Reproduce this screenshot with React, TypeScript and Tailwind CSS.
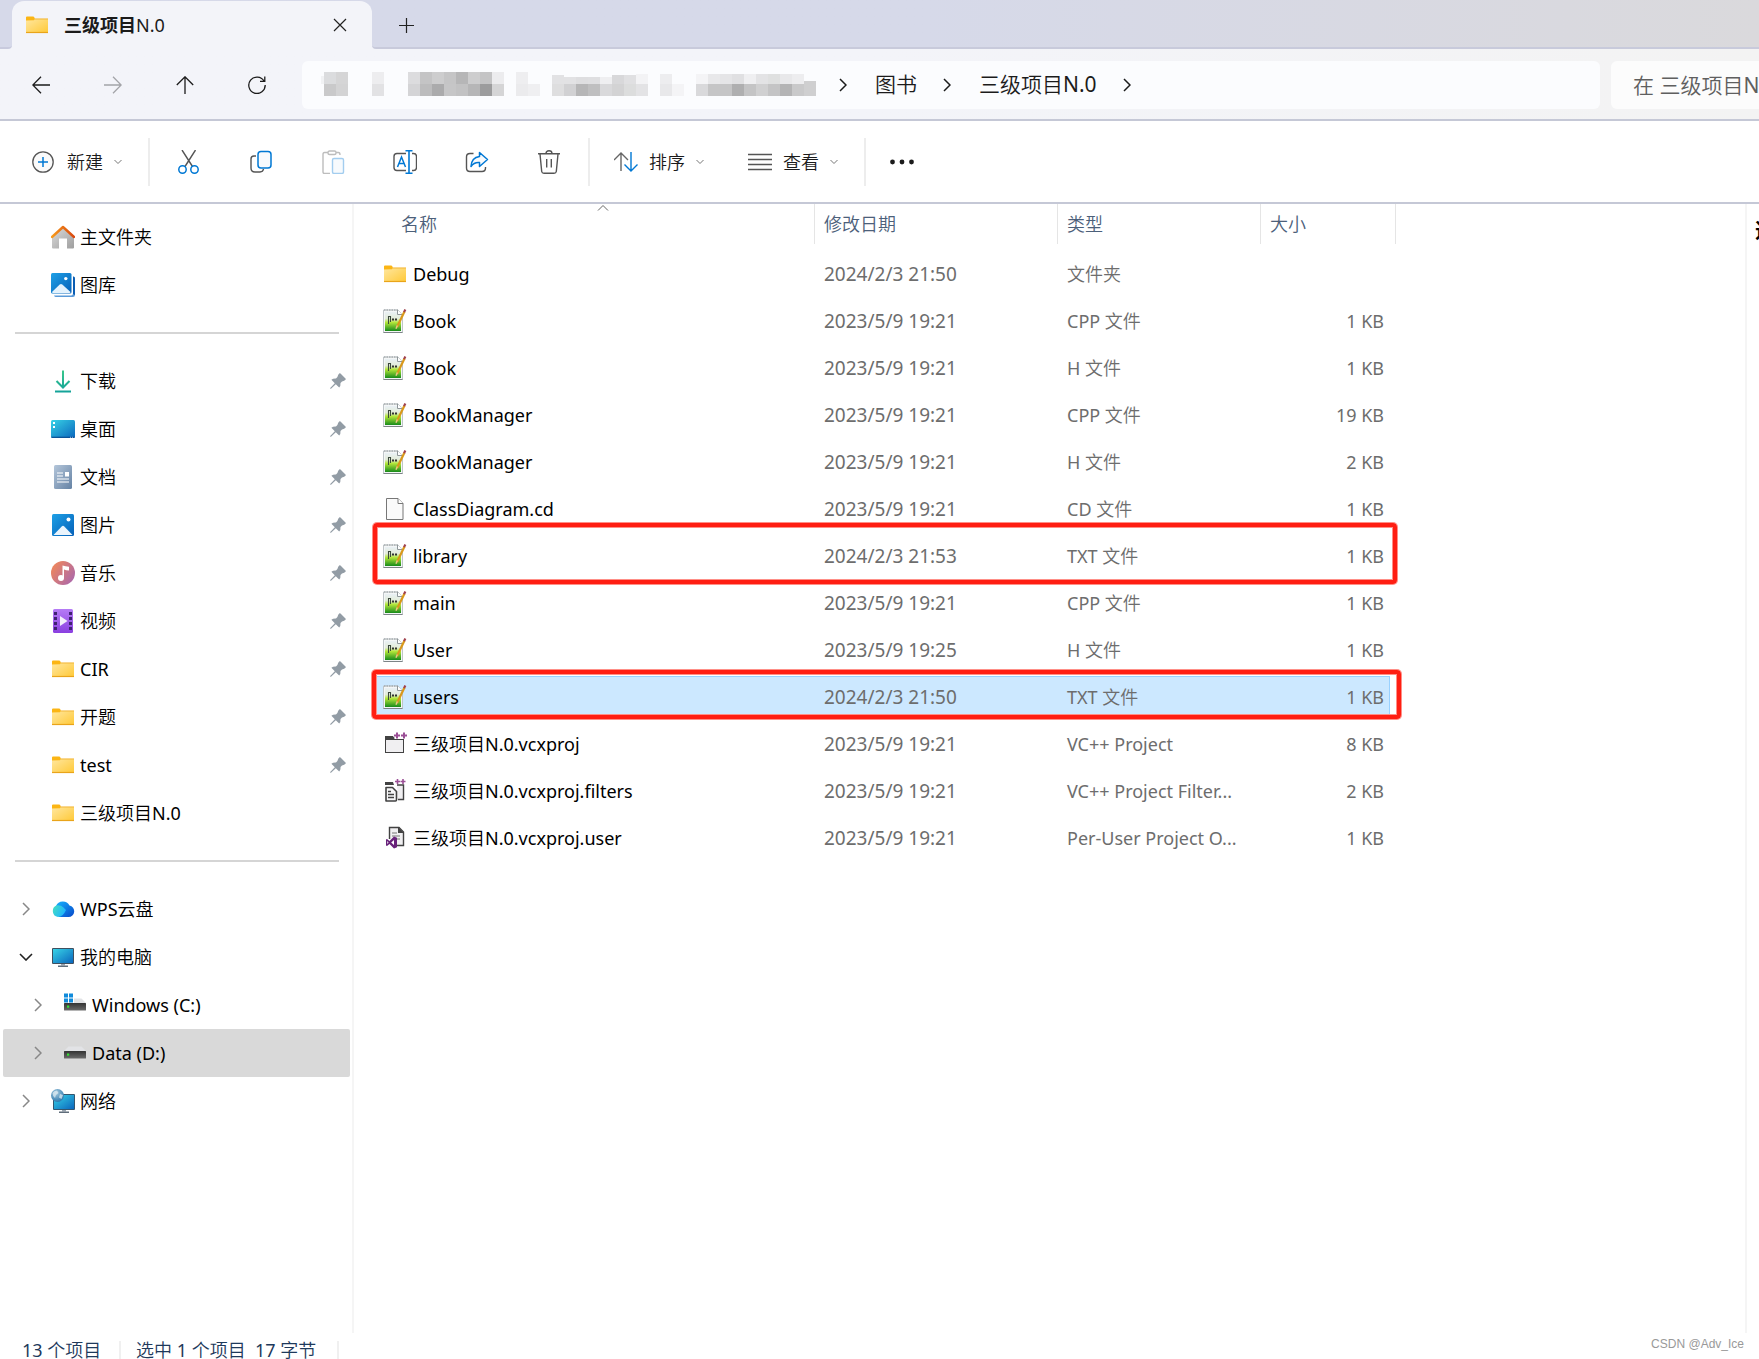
import type { ReactNode } from 'react';

/* ---------- Shared icons ---------- */

function FolderIcon() {
  return (
    <svg width="24" height="24" viewBox="0 0 24 24" className="shrink-0">
      <defs>
        <linearGradient id="folder" x1="0" y1="0" x2="1" y2="1">
          <stop offset="0" stopColor="#ffe7a0" />
          <stop offset="1" stopColor="#ffc937" />
        </linearGradient>
      </defs>
      <path d="M1 4.5q0-1 1-1h6q1 0 1.4 1l.6 1.5V9H1z" fill="#fbb514" />
      <path d="M1 7.5l8-.2 1-1.6h13V20H1z" fill="url(#folder)" />
      <path d="M9.5 6h13.5" stroke="#f2b73c" strokeWidth="1" />
      <path d="M1 19.5h22" stroke="#e9a41a" strokeWidth="1.2" />
    </svg>
  );
}

function HomeIcon() {
  return (
    <svg width="24" height="24" viewBox="0 0 24 24" className="shrink-0">
      <defs>
        <linearGradient id="wall" x1="0" y1="0" x2="1" y2="1">
          <stop offset="0" stopColor="#dcdcdc" />
          <stop offset="1" stopColor="#9e9e9e" />
        </linearGradient>
        <linearGradient id="roof" x1="0" y1="0" x2="1" y2="0">
          <stop offset="0" stopColor="#f79a1c" />
          <stop offset="1" stopColor="#d9480f" />
        </linearGradient>
      </defs>
      <path d="M1 12L12 2l11 10v10.5q0 1-1 1h-6V13.5H8v10H2q-1 0-1-1z" fill="url(#wall)" />
      <path d="M1 12L12 2l11 10" fill="none" stroke="url(#roof)" strokeWidth="2.4" strokeLinecap="round" strokeLinejoin="round" />
    </svg>
  );
}

function GalleryIcon() {
  return (
    <svg width="24" height="24" viewBox="0 0 24 24" className="shrink-0">
      <defs>
        <linearGradient id="sky" x1="0" y1="0" x2="1" y2="1">
          <stop offset="0" stopColor="#1ea0e6" />
          <stop offset="1" stopColor="#0560b8" />
        </linearGradient>
      </defs>
      <path d="M22 3.5q2 0 2 2V22q0 2-2 2H5q-1.500 0-2-1.500h17q2 0 2-2z" fill="#5b9ad8" />
      <path d="M22 3.500q2 0 2 2V22l-2-1z" fill="#0a5db3" />
      <rect width="20.500" height="20.500" rx="1.500" fill="url(#sky)" />
      <path d="M1 19l7.700-7.600q1.300-1 2.600 0L19.500 19q0 .8-1 1H2q-1 0-1-1z" fill="#e3f2fd" />
      <circle cx="14.800" cy="5.600" r="1.700" fill="#fff" />
    </svg>
  );
}

function PictureIcon() {
  return (
    <svg width="24" height="24" viewBox="0 0 24 24" className="shrink-0">
      <rect x="1" y="1" width="22" height="22" rx="1.5" fill="url(#sky)" />
      <path d="M2.500 22l8.200-8.600q1.300-1.100 2.600 0L21.500 22z" fill="#eaf4fc" />
      <circle cx="17.500" cy="6.500" r="2" fill="#fff" />
    </svg>
  );
}

function DownloadIcon() {
  return (
    <svg width="24" height="24" viewBox="0 0 24 24" className="shrink-0">
      <defs>
        <linearGradient id="down" x1="0" y1="0" x2="0" y2="24" gradientUnits="userSpaceOnUse">
          <stop offset="0" stopColor="#3cc98a" />
          <stop offset="1" stopColor="#12a19a" />
        </linearGradient>
      </defs>
      <path d="M12 1.500V18M5.500 12l6.500 6.500 6.500-6.500M4 22.500h16" fill="none" stroke="url(#down)" strokeWidth="2" />
    </svg>
  );
}

function DesktopIcon() {
  return (
    <svg width="24" height="24" viewBox="0 0 24 24" className="shrink-0">
      <defs>
        <linearGradient id="screen" x1="0" y1="0" x2="1" y2="1">
          <stop offset="0" stopColor="#38d3e6" />
          <stop offset="1" stopColor="#0a66bd" />
        </linearGradient>
      </defs>
      <rect y="3" width="24" height="18" rx="1.500" fill="url(#screen)" />
      <path d="M.5 20.300h23" stroke="#0b4f94" strokeWidth="1.200" />
      <path d="M2 5h2v2H2zM2 9h2v2H2z" fill="#fff" />
      <path d="M19 20.300h1M21 20.300h1" stroke="#9bd" strokeWidth="1" />
    </svg>
  );
}

function DocumentIcon() {
  return (
    <svg width="24" height="24" viewBox="0 0 24 24" className="shrink-0">
      <defs>
        <linearGradient id="doc" x1="0" y1="0" x2="1" y2="1">
          <stop offset="0" stopColor="#b4c6da" />
          <stop offset="1" stopColor="#6582a4" />
        </linearGradient>
      </defs>
      <rect x="3" width="18" height="24" rx="1.500" fill="url(#doc)" />
      <path d="M6 8h6M6 11h6M6 14h12M6 17h12" stroke="#fff" strokeWidth="1.200" />
      <rect x="14" y="7" width="4" height="4.500" fill="#fff" />
    </svg>
  );
}

function MusicIcon() {
  return (
    <svg width="24" height="24" viewBox="0 0 24 24" className="shrink-0">
      <defs>
        <linearGradient id="music" x1="0" y1="0.200" x2="1" y2="0.900">
          <stop offset="0" stopColor="#f0875a" />
          <stop offset="1" stopColor="#a766b0" />
        </linearGradient>
      </defs>
      <circle cx="12" cy="12" r="12" fill="url(#music)" />
      <circle cx="10" cy="17" r="3" fill="#fff" />
      <path d="M11.500 17V4.500q3 1 6.500 1.200v3.800q-3 0-5-1V17z" fill="#fff" />
    </svg>
  );
}

function VideoIcon() {
  return (
    <svg width="24" height="24" viewBox="0 0 24 24" className="shrink-0">
      <defs>
        <linearGradient id="film" x1="0" y1="0" x2="0" y2="1">
          <stop offset="0" stopColor="#b57bf5" />
          <stop offset="1" stopColor="#8a3fe0" />
        </linearGradient>
      </defs>
      <rect x="2" width="20" height="24" rx="1.500" fill="url(#film)" />
      <path
        d="M3 3h3v3H3zM3 8h3v3H3zM3 13h3v3H3zM3 18h3v3H3zM18 3h3v3h-3zM18 8h3v3h-3zM18 13h3v3h-3zM18 18h3v3h-3z"
        fill="#3f2272"
      />
      <path d="M9 7v10l7.500-5z" fill="#f2eefa" />
    </svg>
  );
}

function CloudIcon() {
  return (
    <svg width="24" height="24" viewBox="0 0 24 24" className="shrink-0">
      <defs>
        <linearGradient id="cloudLeft" x1="0" y1="0" x2="1" y2="0.500">
          <stop offset="0" stopColor="#46e0c0" />
          <stop offset="1" stopColor="#1fb4ff" />
        </linearGradient>
        <linearGradient id="cloudRight" x1="0" y1="0" x2="1" y2="1">
          <stop offset="0" stopColor="#17b3ff" />
          <stop offset="1" stopColor="#0747c9" />
        </linearGradient>
      </defs>
      <path d="M5 9A7.500 7.500 0 0 1 18.500 8.500a5.800 5.800 0 0 1-1 11.500H8z" fill="url(#cloudRight)" />
      <path d="M6.500 8.200Q10 8 12.500 10.500l2.500 2.500Q12 20 7 20A6 6 0 0 1 6.500 8.200z" fill="url(#cloudLeft)" />
    </svg>
  );
}

function ComputerIcon() {
  return (
    <svg width="24" height="24" viewBox="0 0 24 24" className="shrink-0">
      <rect x="1" y="3" width="22" height="16" rx="1" fill="#3f5060" />
      <rect x="2" y="4" width="20" height="14" fill="url(#screen)" />
      <path d="M10 19h4v1.500h-4z" fill="#9aa5b0" />
      <path d="M7 20.500h10V22H7z" fill="#5f6d7a" />
    </svg>
  );
}

function DriveIcon({ system = false }: { system?: boolean }) {
  return (
    <svg width="24" height="24" viewBox="0 0 24 24" className="shrink-0">
      <defs>
        <linearGradient id="drive" x1="0" y1="0" x2="0" y2="1">
          <stop offset="0" stopColor="#333" />
          <stop offset="1" stopColor="#6b6b6b" />
        </linearGradient>
      </defs>
      <path d="M5.500 5.500h13L23 10H1z" fill="#e2e3e6" />
      <rect x="1" y="10" width="22" height="7.500" rx=".5" fill="url(#drive)" />
      <rect x="4" y="12.500" width="2.200" height="2.200" fill="#35e035" />
      {system && (
        <>
          <rect width="11" height="10" fill="#fff" />
          <path d="M1 .5h4V4.600H1zM6 .5h4V4.600H6zM1 5.500h4V9.500H1zM6 5.500h4V9.500H6z" fill="#118bdb" />
        </>
      )}
    </svg>
  );
}

function NetworkIcon() {
  return (
    <svg width="24" height="24" viewBox="0 0 24 24" className="shrink-0">
      <defs>
        <radialGradient id="globe" cx="0.400" cy="0.300" r="0.800">
          <stop offset="0" stopColor="#a5c9de" />
          <stop offset="1" stopColor="#1f6fa8" />
        </radialGradient>
      </defs>
      <rect x="2" y="5" width="22" height="16" rx="1" fill="#33566e" />
      <rect x="3" y="6" width="20" height="14" fill="url(#screen)" />
      <path d="M11 21h4v1.500h-4z" fill="#9aa5b0" />
      <path d="M8 22.500h10V24H8z" fill="#5f6d7a" />
      <circle cx="6.500" cy="6.500" r="6.500" fill="url(#globe)" />
      <path d="M1.500 4Q3 1.500 6 1.500L7.500 4 5 6 4 9Q1.500 7 1.500 4zM9 5l3 1-1.500 4L8 8.500z" fill="#e6f0f5" opacity=".7" />
    </svg>
  );
}

function PinIcon() {
  return (
    <svg width="16" height="16" viewBox="0 0 16 16" className="shrink-0">
      <path
        d="M9.500.3Q10 0 10.500.4l5 5q.5.500.2 1Q14.500 8 12 8.600L10.500 10q.3 3-1.300 4.600L5.800 11.200 1 15.800H.2V15l4.600-4.800L1.400 6.800Q3 5.300 6 5.500L7.400 4Q8 1.500 9.500.3z"
        fill="#929ca5"
      />
    </svg>
  );
}

/* ---------- File type icons ---------- */

function NotepadIcon() {
  return (
    <svg width="24" height="24" viewBox="0 0 24 24" className="shrink-0">
      <defs>
        <linearGradient id="npp" x1="0" y1="0" x2="0" y2="1">
          <stop offset="0" stopColor="#e9f0f5" />
          <stop offset="0.350" stopColor="#e3ecd8" />
          <stop offset="0.550" stopColor="#b2e63a" />
          <stop offset="1" stopColor="#178a1a" />
        </linearGradient>
      </defs>
      <path d="M.5 1H15l4.500 4.500v18H.5z" fill="#f4f6f7" stroke="#bfc5c8" />
      <path d="M1 1h14" stroke="#8f9699" strokeWidth="1.200" strokeDasharray="1.500 1" />
      <path d="M2 3h12l4 4v15H2z" fill="url(#npp)" />
      <path d="M14.500 1v4.500h5" fill="#fff" stroke="#8f9699" strokeWidth="1" />
      <path d="M.5 23.500h19" stroke="#7d8487" strokeWidth="1" />
      <path d="M5.500 15V7.500h2V13" fill="none" stroke="#3c4a3c" strokeWidth="1.100" />
      <path d="M9 10.500h2M12 10.500h2" stroke="#333" strokeWidth="1.800" />
      <path d="M21.500 2.500L14 18" stroke="#d9981a" strokeWidth="2.200" />
      <path d="M22.300 .5l-1.200 2.600" stroke="#a0414d" strokeWidth="2.200" />
      <path d="M14.300 16.500l-1.300 3.300" stroke="#e8c98a" strokeWidth="1.400" />
    </svg>
  );
}

function BlankFileIcon() {
  return (
    <svg width="24" height="24" viewBox="0 0 24 24" className="shrink-0">
      <path d="M3.500 1.500h11.500l5 5v16H3.500z" fill="#fafafa" stroke="#777" />
      <path d="M15 1.500v5h5" fill="#fff" stroke="#777" />
    </svg>
  );
}

function ProjectIcon() {
  return (
    <svg width="24" height="24" viewBox="0 0 24 24" className="shrink-0">
      <rect x="2.500" y="6" width="18" height="14.500" fill="#f0eff1" stroke="#424242" />
      <path d="M2 4h8l2 3h9v1H2z" fill="#424242" />
      <path d="M11.500 0h12v7h-12z" fill="#fff" />
      <path d="M14 .5v6M11 3.500h6M21 .5v6M18 3.500h6" stroke="#9b4f96" strokeWidth="2" />
    </svg>
  );
}

function FiltersIcon() {
  return (
    <svg width="24" height="24" viewBox="0 0 24 24" className="shrink-0">
      <path d="M2 3h8l1 3H2z" fill="#424242" />
      <path d="M14 6h6.500v14.500H15" fill="#f0eff1" stroke="#424242" strokeWidth="1.400" />
      <path d="M3 8.500h6.500l4 4V21q0 1-1 1H3z" fill="#f7f7f8" stroke="#424242" strokeWidth="1.600" strokeLinejoin="round" />
      <path d="M5 12.500h3M5 15.500h6M5 18.500h6" stroke="#424242" strokeWidth="1.300" />
      <path d="M14.500 0v5M12 2.500h5M20 0v5M17.500 2.500h5" stroke="#9b4f96" strokeWidth="1.600" />
    </svg>
  );
}

function UserOptionsIcon() {
  return (
    <svg width="24" height="24" viewBox="0 0 24 24" className="shrink-0">
      <path d="M6.500 13V1.500H16l4.500 4.500v13.500H14" fill="#f0eff1" stroke="#424242" strokeWidth="1.400" />
      <path d="M15 1l6 6h-6z" fill="#424242" />
      <path d="M9 7h5M9 10h8M12 13h5" stroke="#777" strokeWidth="1.200" />
      <path d="M11 10.500l3 1.200v9.600L11 22.500 6.500 18 4 20l-1-.5v-6l1-.5 2.500 2z" fill="#68217a" />
      <path d="M11 14v5l-2.800-2.500zM4.300 15v3l1.200-1.500z" fill="#fff" />
    </svg>
  );
}

/* ---------- Small glyphs ---------- */

function ChevronDown({ className }: { className: string }) {
  return (
    <svg width="8" height="6" viewBox="0 0 8 6" className={className}>
      <path d="M.5 1L4 4.500 7.500 1" fill="none" stroke="currentColor" />
    </svg>
  );
}

function ChevronRight({ className }: { className?: string }) {
  return (
    <svg width="8" height="14" viewBox="0 0 8 14" className={className}>
      <path d="M1 1l6 6-6 6" fill="none" stroke="currentColor" strokeWidth="1.500" />
    </svg>
  );
}

/* ---------- Data ---------- */

const quickAccess: { label: string; icon: ReactNode; pinned: boolean }[] = [
  { label: '下载', icon: <DownloadIcon />, pinned: true },
  { label: '桌面', icon: <DesktopIcon />, pinned: true },
  { label: '文档', icon: <DocumentIcon />, pinned: true },
  { label: '图片', icon: <PictureIcon />, pinned: true },
  { label: '音乐', icon: <MusicIcon />, pinned: true },
  { label: '视频', icon: <VideoIcon />, pinned: true },
  { label: 'CIR', icon: <FolderIcon />, pinned: true },
  { label: '开题', icon: <FolderIcon />, pinned: true },
  { label: 'test', icon: <FolderIcon />, pinned: true },
  { label: '三级项目N.0', icon: <FolderIcon />, pinned: false },
];

const files = [
  { name: 'Debug', date: '2024/2/3 21:50', type: '文件夹', size: '', icon: <FolderIcon /> },
  { name: 'Book', date: '2023/5/9 19:21', type: 'CPP 文件', size: '1 KB', icon: <NotepadIcon /> },
  { name: 'Book', date: '2023/5/9 19:21', type: 'H 文件', size: '1 KB', icon: <NotepadIcon /> },
  { name: 'BookManager', date: '2023/5/9 19:21', type: 'CPP 文件', size: '19 KB', icon: <NotepadIcon /> },
  { name: 'BookManager', date: '2023/5/9 19:21', type: 'H 文件', size: '2 KB', icon: <NotepadIcon /> },
  { name: 'ClassDiagram.cd', date: '2023/5/9 19:21', type: 'CD 文件', size: '1 KB', icon: <BlankFileIcon /> },
  { name: 'library', date: '2024/2/3 21:53', type: 'TXT 文件', size: '1 KB', icon: <NotepadIcon />, marked: true },
  { name: 'main', date: '2023/5/9 19:21', type: 'CPP 文件', size: '1 KB', icon: <NotepadIcon /> },
  { name: 'User', date: '2023/5/9 19:25', type: 'H 文件', size: '1 KB', icon: <NotepadIcon /> },
  { name: 'users', date: '2024/2/3 21:50', type: 'TXT 文件', size: '1 KB', icon: <NotepadIcon />, selected: true },
  { name: '三级项目N.0.vcxproj', date: '2023/5/9 19:21', type: 'VC++ Project', size: '8 KB', icon: <ProjectIcon /> },
  { name: '三级项目N.0.vcxproj.filters', date: '2023/5/9 19:21', type: 'VC++ Project Filter...', size: '2 KB', icon: <FiltersIcon /> },
  { name: '三级项目N.0.vcxproj.user', date: '2023/5/9 19:21', type: 'Per-User Project O...', size: '1 KB', icon: <UserOptionsIcon /> },
];

/* Pixelated part of the path: x, y, colour of each 12px block */
const mosaic: [number, number, string][] = [
  [7, 4, '#f1f2f4'],
  [10, 0, '#dbdcde'], [22, 0, '#d5d5d6'], [10, 12, '#c9c9ca'], [22, 12, '#d3d3d4'],
  [58, 0, '#ededef'], [58, 12, '#e2e2e4'],
  [94, 0, '#dcdcde'], [106, 0, '#c4c4c5'], [118, 0, '#cdcdce'], [130, 0, '#c5c5c6'], [142, 0, '#b6b6b7'], [154, 0, '#cdcdce'], [166, 0, '#c4c4c5'], [178, 0, '#ececee'],
  [94, 12, '#d4d4d6'], [106, 12, '#bcbcbd'], [118, 12, '#ababac'], [130, 12, '#c6c6c7'], [142, 12, '#c2c2c3'], [154, 12, '#b6b6b7'], [166, 12, '#9c9c9d'], [178, 12, '#d5d5d6'],
  [202, 0, '#eeeef0'], [202, 12, '#ebebed'], [214, 12, '#efeff1'],
  [238, 3, '#e2e2e4'], [250, 5, '#e2e2e4'], [262, 5, '#dedee0'], [274, 5, '#dfdfe1'], [286, 5, '#efeff1'], [298, 3, '#d8d8da'], [310, 3, '#e0e0e2'], [322, 2, '#f3f3f5'],
  [238, 12, '#dededf'], [250, 12, '#d1d1d3'], [262, 12, '#b6b6b7'], [274, 12, '#bfbfc0'], [286, 12, '#d9d9db'], [298, 12, '#d3d3d4'], [310, 12, '#dcdddd'], [322, 12, '#e3e3e5'],
  [346, 2, '#ededef'], [346, 12, '#e8e8ea'], [358, 12, '#f4f4f6'],
  [382, 2, '#f4f4f6'], [394, 2, '#e8e8ea'], [406, 2, '#e5e5e7'], [418, 2, '#e0e0e2'], [430, 2, '#efeff1'], [442, 2, '#e3e3e5'], [454, 2, '#dfe0e0'], [466, 2, '#e8e8ea'], [478, 2, '#ededef'],
  [382, 12, '#d9d9db'], [394, 12, '#c5c5c6'], [406, 12, '#c5c5c6'], [418, 12, '#afafb0'], [430, 12, '#c4c4c5'], [442, 12, '#d0d0d1'], [454, 12, '#c4c4c5'], [466, 12, '#b4b4b5'], [478, 12, '#c9c9ca'], [490, 9, '#cfcfd0'], [490, 12, '#cfcfd0'],
];

/* ---------- Sections ---------- */

function TabStrip() {
  return (
    <div className="flex h-[49px] bg-[#f3f4f9]">
      <div className="w-3 rounded-br border-b-2 border-[#c8cadd] bg-[#d6d9e9]" />
      <div className="w-[360px] bg-linear-to-b from-[#d6d9e9] from-50% to-[#f3f4f9] to-50%">
        <div className="mt-px flex h-12 items-center rounded-t-xl bg-[#f3f4f9] pr-[22px] pl-[13px]">
          <FolderIcon />
          <span className="ml-[15px] flex-1 font-['Noto_Sans','Noto_Sans_CJK_SC',sans-serif] text-lg leading-6 text-[#1b1b1b]">
            <b>三级项目</b>N.0
          </span>
          <button aria-label="关闭标签页" className="flex w-5 justify-center">
            <svg width="14" height="14" viewBox="0 0 14 14">
              <path d="M1 1l12 12M13 1L1 13" stroke="#222" strokeWidth="1.200" />
            </svg>
          </button>
        </div>
      </div>
      <div className="flex flex-1 items-center rounded-bl border-b-2 border-[#c8cadb] bg-linear-to-r from-[#d6d9e9] from-40% to-[#dad9dc] pt-[3px] pl-[27px]">
        <button aria-label="新建标签页">
          <svg width="15" height="15" viewBox="0 0 15 15">
            <path d="M7.500 0v15M0 7.500h15" stroke="#222" strokeWidth="1.200" />
          </svg>
        </button>
      </div>
    </div>
  );
}

function NavBar() {
  return (
    <div className="flex items-center border-b-2 border-[#c5c8d6] bg-linear-to-r from-[#f3f4f9] from-50% to-[#f3f3f3] pt-3 pb-[10px]">
      <div className="flex w-[302px] shrink-0 items-center gap-[54px] pl-8 text-[#1b1b1b]">
        <button aria-label="后退">
          <svg width="18" height="18" viewBox="0 0 18 18" fill="none" stroke="currentColor" strokeWidth="1.300">
            <path d="M9 .8L.8 9 9 17.200M.8 9H18" />
          </svg>
        </button>
        <button aria-label="前进" className="text-[#a3a4a8]">
          <svg width="18" height="18" viewBox="0 0 18 18" fill="none" stroke="currentColor" strokeWidth="1.300">
            <path d="M9 .8L17.200 9 9 17.200M17.200 9H0" />
          </svg>
        </button>
        <button aria-label="向上">
          <svg width="18" height="18" viewBox="0 0 18 18" fill="none" stroke="currentColor" strokeWidth="1.300">
            <path d="M.8 9L9 .8 17.200 9M9 .8V18" />
          </svg>
        </button>
        <button aria-label="刷新">
          <svg width="18" height="18" viewBox="0 0 18 18" fill="none" stroke="currentColor" strokeWidth="1.300">
            <path d="M16 5A8.200 8.200 0 1 0 17.200 9M16.800 .5V5.300H12" />
          </svg>
        </button>
      </div>
      <nav className="flex h-12 min-w-0 flex-1 items-center rounded-md bg-[#fbfcfe] pl-3 text-[21px] text-[#1b1b1b]">
        <svg width="504" height="26" viewBox="0 0 504 26" className="mr-[21px] shrink-0" shapeRendering="crispEdges">
          {mosaic.map(([x, y, fill]) => (
            <rect key={`${x}-${y}`} x={x} y={y} width="12" height={y >= 12 ? 12 : 12 - y} fill={fill} />
          ))}
        </svg>
        <ChevronRight />
        <a href="#books" className="mr-[26px] ml-7">图书</a>
        <ChevronRight />
        <a href="#project" className="mr-[26px] ml-7">三级项目N.0</a>
        <ChevronRight />
      </nav>
      <input
        type="text"
        aria-label="搜索"
        placeholder="在 三级项目N.0 中搜索"
        className="ml-[11px] h-12 w-[148px] shrink-0 rounded-l-md bg-[#fcfcfc] pl-[22px] text-[21px] outline-none placeholder:text-[#5f5f5f]"
      />
    </div>
  );
}

function Toolbar() {
  return (
    <div className="flex h-[83px] items-center border-b-2 border-[#c5c8d6] text-lg leading-6 text-[#1b1b1b]">
      <button className="ml-8 flex items-center">
        <svg width="22" height="22" viewBox="0 0 22 22" fill="none">
          <circle cx="11" cy="11" r="10.200" stroke="#555" strokeWidth="1.300" fill="#fafafa" />
          <path d="M11 6v10M6 11h10" stroke="#0078d4" strokeWidth="1.500" />
        </svg>
        <span className="ml-[13px]">新建</span>
        <ChevronDown className="ml-[11px] text-[#777]" />
      </button>
      <div className="ml-[26px] h-12 w-[2px] bg-[#ededed]" />

      <div className="ml-[27px] flex gap-12">
        <button aria-label="剪切">
          <svg width="24" height="24" viewBox="0 0 24 24" fill="none" strokeWidth="1.400">
            <path d="M5 0l10.500 16.500M18.500 0L8 16.500" stroke="#555" />
            <circle cx="5.500" cy="19.500" r="3.700" stroke="#0078d4" strokeWidth="1.500" />
            <circle cx="17.500" cy="19.500" r="3.700" stroke="#0078d4" strokeWidth="1.500" />
          </svg>
        </button>
        <button aria-label="复制">
          <svg width="24" height="24" viewBox="0 0 24 24" fill="none" strokeWidth="1.400">
            <path d="M7 6H5Q2 6 2 9v9q0 4 4 4h5q3 0 3.500-3" stroke="#555" />
            <rect x="9" y="1.500" width="13" height="16.500" rx="3" stroke="#0078d4" strokeWidth="1.500" fill="#f7fafd" />
          </svg>
        </button>
        <button aria-label="粘贴" disabled>
          <svg width="24" height="24" viewBox="0 0 24 24" fill="none" strokeWidth="1.400">
            <path d="M7 2.500H3.500Q2 2.500 2 4.500V22q0 1.500 1.500 1.500H9M15 2.500h2.500Q19 2.500 19 5" stroke="#bdbdbd" />
            <rect x="7" y="1" width="8" height="3.500" rx="1.500" stroke="#bdbdbd" />
            <rect x="11.500" y="8.500" width="11" height="15" rx="1.500" stroke="#a3cdef" fill="#f7fafd" />
          </svg>
        </button>
        <button aria-label="重命名">
          <svg width="24" height="24" viewBox="0 0 24 24" fill="none" strokeWidth="1.400">
            <path d="M13 3.500H4Q1 3.500 1 6.500v11q0 3 3 3h9M19 3.500h1.500q3 0 3 3v11q0 3-3 3H19" stroke="#555" />
            <path d="M16 .8v22.400M12.500 .8h7M12.500 23.200h7" stroke="#0078d4" strokeWidth="1.600" />
            <path d="M4.500 17L8.500 7l4 10M6 13.500h5" stroke="#0078d4" strokeWidth="1.500" />
          </svg>
        </button>
        <button aria-label="共享">
          <svg width="24" height="24" viewBox="0 0 24 24" fill="none" strokeWidth="1.400">
            <path d="M8.500 3.500H5Q1.500 3.500 1.500 7v11q0 3.500 3.500 3.500h12q3.500 0 3.500-3.500v-1" stroke="#555" />
            <path d="M14.500 2.500L22.500 9.500l-8 7V12.500Q9 12 6 16.500 6.500 7.500 14.500 6.500z" stroke="#0078d4" strokeWidth="1.500" strokeLinejoin="round" fill="#f7fafd" />
          </svg>
        </button>
        <button aria-label="删除">
          <svg width="24" height="24" viewBox="0 0 24 24" fill="none" stroke="#555" strokeWidth="1.400">
            <path d="M1 3.700h22M9 3.500Q9 .8 12 .8t3 2.700M3 4l1.700 17.500Q5 23.300 7 23.300h10q2 0 2.300-1.800L21 4M9.700 9v8.500M14.300 9v8.500" />
          </svg>
        </button>
      </div>
      <div className="ml-[27px] h-12 w-[2px] bg-[#ededed]" />

      <button className="ml-6 flex items-center">
        <svg width="24" height="20" viewBox="0 0 24 20" fill="none" strokeWidth="1.400">
          <path d="M0 8l7-7 7 7M7 1v18" stroke="#666" />
          <path d="M10.500 12.500l6.500 6.500 6.500-6.500M17 0v19" stroke="#0078d4" />
        </svg>
        <span className="ml-[11px]">排序</span>
        <ChevronDown className="ml-[11px] text-[#777]" />
      </button>
      <button className="ml-11 flex items-center">
        <svg width="24" height="18" viewBox="0 0 24 18">
          <path d="M0 1.500h24M0 6.500h24M0 11.500h24M0 16.500h24" stroke="#555" strokeWidth="1.300" />
        </svg>
        <span className="ml-[11px]">查看</span>
        <ChevronDown className="ml-[11px] text-[#777]" />
      </button>
      <div className="ml-[26px] h-12 w-[2px] bg-[#ededed]" />
      <button aria-label="更多" className="ml-6">
        <svg width="25" height="6" viewBox="0 0 25 6" fill="#1b1b1b">
          <circle cx="2.500" cy="3" r="2.400" />
          <circle cx="12" cy="3" r="2.400" />
          <circle cx="21.500" cy="3" r="2.400" />
        </svg>
      </button>
    </div>
  );
}

function Sidebar() {
  return (
    <aside className="w-[354px] shrink-0 border-r-2 border-[#f5f5f5] pt-[9px] text-lg leading-6 text-black">
      <a href="#home" className="flex h-12 items-center gap-[5px] pl-[51px]">
        <HomeIcon />
        主文件夹
      </a>
      <a href="#gallery" className="flex h-12 items-center gap-[5px] pl-[51px]">
        <GalleryIcon />
        图库
      </a>
      <div className="flex h-12 items-center pr-[13px] pl-[15px]">
        <hr className="w-full border-t-2 border-[#d5d5d5]" />
      </div>

      {quickAccess.map((item) => (
        <a key={item.label} href="#folder" className="flex h-12 items-center gap-[5px] pr-[6px] pl-[51px]">
          {item.icon}
          <span className="flex-1">{item.label}</span>
          {item.pinned && <PinIcon />}
        </a>
      ))}
      <div className="flex h-12 items-center pr-[13px] pl-[15px]">
        <hr className="w-full border-t-2 border-[#d5d5d5]" />
      </div>

      <a href="#wps" className="flex h-12 items-center gap-[5px] pl-[22px]">
        <ChevronRight className="mr-4 text-[#888]" />
        <CloudIcon />
        WPS云盘
      </a>
      <a href="#computer" className="flex h-12 items-center gap-[5px] pl-[19px]">
        <svg width="14" height="8" viewBox="0 0 14 8" className="mr-[13px]">
          <path d="M1 1l6 6 6-6" fill="none" stroke="#222" strokeWidth="1.600" />
        </svg>
        <ComputerIcon />
        我的电脑
      </a>
      <a href="#c" className="flex h-12 items-center gap-[5px] pl-[34px]">
        <ChevronRight className="mr-4 text-[#888]" />
        <DriveIcon system />
        Windows (C:)
      </a>
      <a href="#d" className="mr-[2px] ml-[3px] flex h-12 items-center gap-[5px] rounded-xs bg-[#d9d9d9] pl-[31px]">
        <ChevronRight className="mr-4 text-[#888]" />
        <DriveIcon />
        Data (D:)
      </a>
      <a href="#network" className="flex h-12 items-center gap-[5px] pl-[22px]">
        <ChevronRight className="mr-4 text-[#888]" />
        <NetworkIcon />
        网络
      </a>
    </aside>
  );
}

function FileList() {
  return (
    <main className="min-w-0 flex-1 pl-[17px]">
      <table className="w-[1025px] table-fixed text-left text-lg leading-6 text-[#6d6d6d]">
        <colgroup>
          <col className="w-[444px]" />
          <col className="w-[243px]" />
          <col className="w-[203px]" />
          <col className="w-[135px]" />
        </colgroup>
        <thead className="text-[#4c607a]">
          <tr>
            <th className="p-0 pb-[6px] font-normal">
              <div className="relative flex h-10 items-center border-r border-[#e5e5e5] pl-[30px]">
                名称
                <svg width="12" height="8" viewBox="0 0 12 8" className="absolute top-0 left-[226px]">
                  <path d="M1 6.500l5-5 5 5" fill="none" stroke="#666" />
                </svg>
              </div>
            </th>
            <th className="p-0 pb-[6px] font-normal">
              <div className="flex h-10 items-center border-r border-[#e5e5e5] pl-[9px]">修改日期</div>
            </th>
            <th className="p-0 pb-[6px] font-normal">
              <div className="flex h-10 items-center border-r border-[#e5e5e5] pl-[9px]">类型</div>
            </th>
            <th className="p-0 pb-[6px] font-normal">
              <div className="flex h-10 items-center border-r border-[#e5e5e5] pl-[9px]">大小</div>
            </th>
          </tr>
        </thead>
        <tbody>
          {files.map((file, i) => (
            <tr key={i} className="relative h-[47px]">
              <td className="p-0 pl-3 text-black">
                {file.selected && (
                  <>
                    <div className="absolute top-[3px] right-[6px] bottom-px left-[5px] border border-[#99d1ff] bg-[#cce8ff]" />
                    <div className="absolute -top-[3px] -right-[5px] bottom-px left-px rounded-sm border-4 border-[#ff1e12] shadow-[0_0_0_1px_#ff8f87,inset_0_0_0_1px_#ff8f87]" />
                  </>
                )}
                {file.marked && (
                  <div className="absolute -top-[9px] -right-px -bottom-[5px] left-[2px] rounded-sm border-4 border-[#ff1e12] shadow-[0_0_0_1px_#ff8f87,inset_0_0_0_1px_#ff8f87]" />
                )}
                <div className="relative flex items-center gap-[6px]">
                  {file.icon}
                  {file.name}
                </div>
              </td>
              <td className="p-0 pl-[9px] text-[19px]">
                <span className="relative">{file.date}</span>
              </td>
              <td className="p-0 pl-[9px]">
                <span className="relative">{file.type}</span>
              </td>
              <td className="p-0 pr-3 text-right">
                <span className="relative">{file.size}</span>
              </td>
            </tr>
          ))}
        </tbody>
      </table>
    </main>
  );
}

export default function App() {
  return (
    <div className="relative flex min-h-screen flex-col overflow-hidden bg-white font-['Noto_Sans','Noto_Sans_CJK_SC_DemiLight','Noto_Sans_CJK_SC_Light','Noto_Sans_CJK_SC',sans-serif]">
      <TabStrip />
      <NavBar />
      <Toolbar />
      <div className="flex flex-1">
        <Sidebar />
        <FileList />
        {/* Preview pane, mostly off screen */}
        <section className="w-[14px] shrink-0 overflow-hidden border-l-2 border-[#f5f5f5] pt-[15px] pl-[8px] font-['Noto_Sans','Noto_Sans_CJK_SC',sans-serif] text-xl leading-6 font-bold whitespace-nowrap text-black">
          选择要预览的文件。
        </section>
      </div>
      <footer className="flex h-[26px] pt-[8px] pl-[22px] text-lg leading-[18px] text-[#1e395b]">
        <span className="w-[99px] border-r-2 border-[#f0f0f0]">13 个项目</span>
        <span className="ml-[15px] w-[203px] border-r-2 border-[#f0f0f0] whitespace-pre">选中 1 个项目  17 字节</span>
      </footer>
      <p className="absolute right-[15px] bottom-[7px] font-['Liberation_Sans',sans-serif] text-xs text-[#999]">CSDN @Adv_Ice</p>
    </div>
  );
}
